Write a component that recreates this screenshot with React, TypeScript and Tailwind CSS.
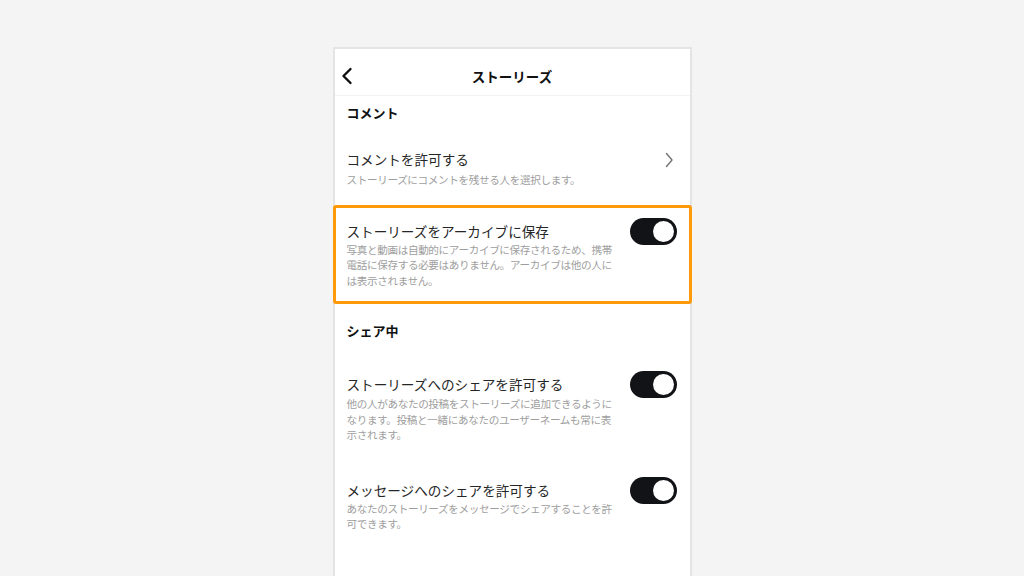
import type { ReactNode } from "react";

function Toggle() {
  return (
    <div className="-mt-[3px] mr-[1px] flex h-[27px] w-[47px] shrink-0 items-center justify-end rounded-full bg-[#121316] pr-[3px]">
      <div className="h-[21px] w-[21px] rounded-full bg-white" />
    </div>
  );
}

function BackIcon() {
  return (
    <svg width="14" height="18" viewBox="0 0 14 18" fill="none">
      <polyline
        points="10.5,2 3.5,9 10.5,16"
        stroke="#111"
        strokeWidth="2.4"
        strokeLinecap="round"
        strokeLinejoin="round"
      />
    </svg>
  );
}

function ForwardIcon() {
  return (
    <svg width="10" height="16" viewBox="0 0 10 16" fill="none">
      <polyline
        points="2.5,1.5 8,8 2.5,14.5"
        stroke="#737373"
        strokeWidth="1.4"
        strokeLinecap="round"
        strokeLinejoin="round"
      />
    </svg>
  );
}

function SectionHeader({ children, className }: { children: ReactNode; className: string }) {
  return (
    <div className={`px-[12px] text-[13px] font-bold leading-[18px] text-[#111] ${className}`}>
      {children}
    </div>
  );
}

function Row({
  title,
  note,
  trailing,
  className,
  noteClass = "mt-[1px]",
}: {
  title: string;
  note: string;
  trailing: ReactNode;
  className: string;
  noteClass?: string;
}) {
  return (
    <div className={`flex items-start ${className}`}>
      <div className="w-[272px]">
        <div className="text-[13.6px] leading-[20px] text-[#262626]">{title}</div>
        <div className={`text-[10.6px] leading-[15.5px] tracking-[-0.36px] text-[#9e9e9e] ${noteClass}`}>
          {note}
        </div>
      </div>
      <div className="flex flex-1 justify-end">{trailing}</div>
    </div>
  );
}

export default function App() {
  return (
    <div className="flex h-[576px] justify-center overflow-hidden bg-[#f4f4f4] pt-[47px] font-['Noto_Sans_CJK_JP','Noto_Sans',sans-serif]">
      <div className="flex w-[359px] flex-col border-2 border-b-0 border-[#e4e4e4] bg-white">
        {/* nav bar */}
        <div className="flex h-[47px] items-center border-b border-[#f3f3f3] px-[5px] pt-[8px]">
          <div className="flex w-[40px] items-center">
            <BackIcon />
          </div>
          <div className="flex-1 text-center text-[13.5px] font-bold text-[#111]">ストーリーズ</div>
          <div className="w-[40px]" />
        </div>

        <SectionHeader className="pt-[8px]">コメント</SectionHeader>

        <Row
          className="px-[12px] pb-[17px] pt-[27px]"
          noteClass="mt-[3px]"
          title="コメントを許可する"
          note="ストーリーズにコメントを残せる人を選択します。"
          trailing={
            <div className="mr-[4px] mt-[3px]">
              <ForwardIcon />
            </div>
          }
        />

        <Row
          className="-mx-[2px] rounded-[3px] border-[3px] border-[#ff9a0a] pb-[13px] pl-[11px] pr-[11px] pt-[13px]"
          title="ストーリーズをアーカイブに保存"
          note="写真と動画は自動的にアーカイブに保存されるため、携帯電話に保存する必要はありません。アーカイブは他の人には表示されません。"
          trailing={<Toggle />}
        />

        <SectionHeader className="pt-[18px]">シェア中</SectionHeader>

        <Row
          className="px-[12px] pt-[34px]"
          noteClass="mt-[2px]"
          title="ストーリーズへのシェアを許可する"
          note="他の人があなたの投稿をストーリーズに追加できるようになります。投稿と一緒にあなたのユーザーネームも常に表示されます。"
          trailing={<Toggle />}
        />

        <Row
          className="px-[12px] pt-[37px]"
          title="メッセージへのシェアを許可する"
          note="あなたのストーリーズをメッセージでシェアすることを許可できます。"
          trailing={<Toggle />}
        />
      </div>
    </div>
  );
}
